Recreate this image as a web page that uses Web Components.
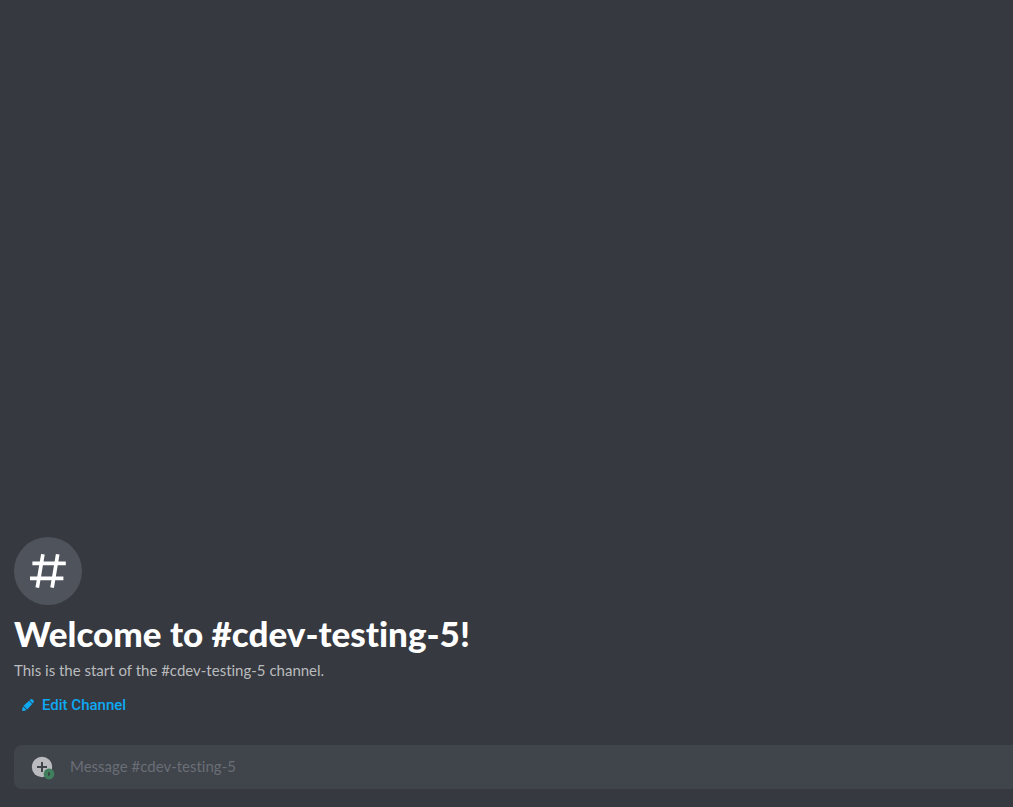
<!DOCTYPE html>
<html lang="en">
<head>
<meta charset="utf-8">
<title>#cdev-testing-5</title>
<style>
  body { margin: 0; background: #36393f; font-family: Lato, "Noto Sans", sans-serif; font-variant-ligatures: none; }
</style>
</head>
<body>
<chat-view>
  <channel-welcome>
    <channel-badge slot="icon"></channel-badge>
    <span slot="title">Welcome to #cdev-testing-5!</span>
    <span slot="text">This is the start of the #cdev-testing-5 channel.</span>
    <edit-button slot="action">Edit Channel</edit-button>
  </channel-welcome>
  <message-box slot="composer" placeholder="Message #cdev-testing-5"></message-box>
</chat-view>
<script>
  const define = (name, html, setup) => customElements.define(name, class extends HTMLElement {
    constructor() {
      super();
      this.attachShadow({ mode: "open" }).innerHTML = html;
    }
    connectedCallback() {
      if (setup) setup(this);
    }
  });

  define("chat-view", `
    <style>
      :host { display: flex; flex-direction: column; min-height: 100vh; box-sizing: border-box; padding: 0 0 18px 14px; }
      main { flex: 1; display: flex; flex-direction: column; justify-content: flex-end; padding-bottom: 24px; }
    </style>
    <main><slot></slot></main>
    <slot name="composer"></slot>`);

  define("channel-badge", `
    <style>
      :host { display: flex; align-items: center; justify-content: center; width: 68px; height: 68px; border-radius: 50%; background: #4f545c; }
      svg { display: block; }
    </style>
    <svg width="44" height="44" viewBox="0 0 44 44" fill="none" stroke="#fff" stroke-width="3.7" aria-hidden="true">
      <path d="M16.9 5.2 11.3 38.6M31.7 5.2 26.1 38.6M6.4 14.4H39.8M4 29.3H37.4"/>
    </svg>`);

  define("channel-welcome", `
    <style>
      :host { display: flex; flex-direction: column; align-items: flex-start; gap: 8px; }
      h1 { margin: 0; font: 900 35px/40px Lato, sans-serif; font-variant-ligatures: none; color: #fff; }
      p { margin: 0; font-size: 15px; line-height: 18px; padding-bottom: 2px; color: #b9bbbe; }
    </style>
    <slot name="icon"></slot>
    <h1><slot name="title"></slot></h1>
    <p><slot name="text"></slot></p>
    <slot name="action"></slot>`);

  define("edit-button", `
    <style>
      :host { display: block; }
      button { display: flex; align-items: center; gap: 8px; height: 32px; margin: 0; padding: 0 8px; border: 0; background: none; color: #0ea8f3; font: 500 15px/16px Roboto, sans-serif; cursor: pointer; }
      svg { display: block; }
    </style>
    <button type="button">
      <svg width="12" height="12" viewBox="0 0 12 12" fill="#0ea8f3" aria-hidden="true">
        <path d="M7.6 1.3 8.4.6Q9.5-.4 10.6.5L11.5 1.4Q12.4 2.5 11.4 3.6L10.7 4.4ZM7.1 1.8 10.2 4.9 5.2 10.5 1.5 6.8ZM1.1 7.4 4.6 10.9Q2.8 11.9.5 11.9 0 11.8.1 11.2.2 9 1.1 7.4Z"/>
      </svg>
      <span><slot></slot></span>
    </button>`);

  define("message-box", `
    <style>
      :host { display: flex; align-items: center; height: 44px; border-radius: 8px 0 0 8px; background: #40444b; }
      button { flex: none; display: block; margin: 0 0 0 16px; padding: 0; border: 0; background: none; cursor: pointer; }
      svg { display: block; overflow: visible; }
      input { flex: 1; min-width: 0; height: 42px; margin: 0 0 2px 16px; padding: 0; border: 0; outline: 0; background: none; color: #dcddde; font: 15px/20px Lato, sans-serif; font-variant-ligatures: none; }
      input::placeholder { color: #6a6e76; opacity: 1; }
    </style>
    <button type="button" aria-label="Attach">
      <svg width="24" height="24" viewBox="0 0 24 24" aria-hidden="true">
        <circle cx="12" cy="12" r="10.2" fill="#b9bbbe"/>
        <path d="M12 7V17M7 12H17" stroke="#40444b" stroke-width="2"/>
        <circle cx="19" cy="19" r="5.4" fill="#3f7f5d"/>
        <path d="M18 17.2H19.2L20.2 19 19.2 20.8H18Z" fill="#373f42"/>
      </svg>
    </button>
    <input type="text">`, host => {
      const input = host.shadowRoot.querySelector("input");
      input.placeholder = host.getAttribute("placeholder");
      input.setAttribute("aria-label", input.placeholder);
    });
</script>
</body>
</html>
